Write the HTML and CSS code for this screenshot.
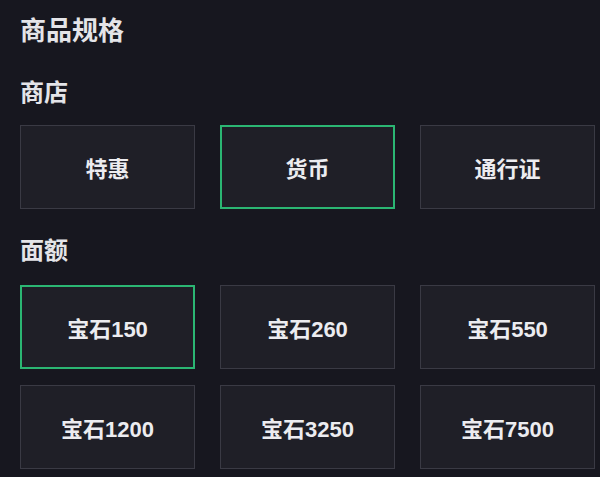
FILE: index.html
```html
<!DOCTYPE html>
<html lang="zh-CN">
<head>
<meta charset="utf-8">
<title>商品规格</title>
<link rel="stylesheet" href="styles.css">
</head>
<body>
<div class="panel">
  <h1 class="title">商品规格</h1>
  <h2 class="label label-first">商店</h2>
  <div class="grid">
    <div class="opt">特惠</div>
    <div class="opt active">货币</div>
    <div class="opt">通行证</div>
  </div>
  <h2 class="label">面额</h2>
  <div class="grid">
    <div class="opt active">宝石150</div>
    <div class="opt">宝石260</div>
    <div class="opt">宝石550</div>
    <div class="opt">宝石1200</div>
    <div class="opt">宝石3250</div>
    <div class="opt">宝石7500</div>
  </div>
</div>
</body>
</html>
```
FILE: styles.css
```css
html, body {
  margin: 0;
  padding: 0;
  background: #17171f;
  height: 100%;
}
body {
  font-family: "Liberation Sans", "Noto Sans CJK SC", sans-serif;
  color: #e6e6ea;
}
.panel {
  padding: 13px 5px 0 20px;
}
.title {
  margin: 0;
  font-size: 26px;
  line-height: 36px;
  font-weight: 700;
  color: #e4e4e8;
}
.label {
  margin: 26px 0 18px;
  font-size: 24px;
  line-height: 32px;
  font-weight: 700;
  color: #e4e4e8;
}
.label-first {
  margin-top: 28px;
  margin-bottom: 16px;
}
.grid {
  display: grid;
  grid-template-columns: repeat(3, 175px);
  column-gap: 25px;
  row-gap: 16px;
}
.opt {
  box-sizing: border-box;
  height: 84px;
  display: flex;
  align-items: center;
  justify-content: center;
  background: #1f1f27;
  border: 1px solid #3a3a44;
  font-size: 22px;
  font-weight: 700;
  color: #ececf0;
}
.opt.active {
  border: 2px solid #2bb673;
}
```
